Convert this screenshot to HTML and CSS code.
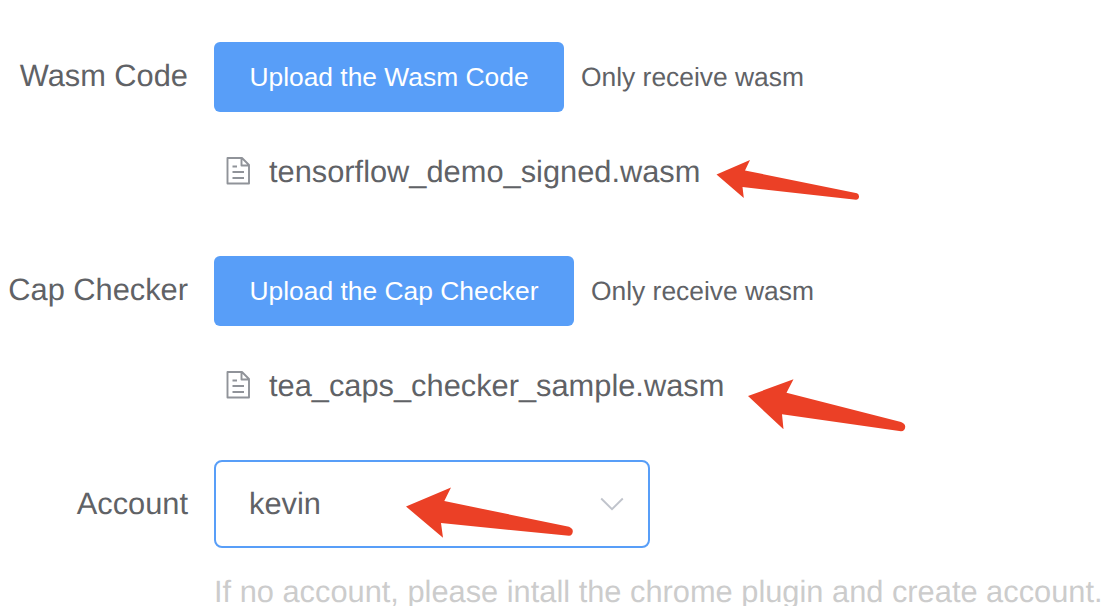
FILE: index.html
```html
<!DOCTYPE html>
<html lang="en">
<head>
<meta charset="utf-8">
<title>Upload</title>
<link rel="stylesheet" href="styles.css">
</head>
<body>
<form class="form">
  <div class="row">
    <label class="label">Wasm Code</label>
    <div class="content">
      <div class="upload">
        <button type="button" class="button button-code">Upload the Wasm Code</button>
        <span class="tip">Only receive wasm</span>
      </div>
      <div class="file">
        <svg class="doc" viewBox="0 0 24 28"><path d="M1.5 1H16L23 8V26.5H1.5Z M15.5 1V8.5H23 M6.5 9.5H11 M6.5 15H18 M6.5 21H18"/></svg>
        <span>tensorflow_demo_signed.wasm</span>
        <svg class="arrow arrow-code" viewBox="716 160 144 39"><path d="M716.5 174.5L750 160L745 170.5L857 193.3Q859.3 194.5 859 197Q858.5 199.8 856 199.8L742.5 187L743.8 198Z"/></svg>
      </div>
    </div>
  </div>
  <div class="row">
    <label class="label">Cap Checker</label>
    <div class="content">
      <div class="upload">
        <button type="button" class="button button-cap">Upload the Cap Checker</button>
        <span class="tip">Only receive wasm</span>
      </div>
      <div class="file">
        <svg class="doc" viewBox="0 0 24 28"><path d="M1.5 1H16L23 8V26.5H1.5Z M15.5 1V8.5H23 M6.5 9.5H11 M6.5 15H18 M6.5 21H18"/></svg>
        <span>tea_caps_checker_sample.wasm</span>
        <svg class="arrow arrow-cap" viewBox="748 379 158 54"><path d="M748 396L793.5 379.3L786.5 392.7L901 422Q905.5 423.8 905.2 427Q905 431 901 431.3L782 414.3L783.5 429.3Z"/></svg>
      </div>
    </div>
  </div>
  <div class="row">
    <label class="label label-account">Account</label>
    <div class="content">
      <div class="select">
        <span>kevin</span>
        <svg class="chevron" viewBox="0 0 24 14"><path d="M1.2 1.5L12 12.2L22.8 1.5"/></svg>
        <svg class="arrow arrow-account" viewBox="406 487 168 52"><path d="M406 506.5L451 487.5L444.3 501L569 526.8Q573 528.5 572.8 531.5Q572.5 535.5 569 535.8L441 523L443 537.8Z"/></svg>
      </div>
      <div class="help">If no account, please intall the chrome plugin and create account.</div>
    </div>
  </div>
</form>
</body>
</html>
```

FILE: styles.css
```css
body {
  margin: 0;
  background: #fff;
  color: #606266;
  font: 30.8px/40px "Liberation Sans", Arial, sans-serif;
  text-rendering: geometricPrecision;
  overflow: hidden;
}

.form {
  width: 1108px;
  height: 606px;
  padding-top: 42px;
  box-sizing: border-box;
  overflow: hidden;
}

.row {
  display: grid;
  grid-template-columns: 188px 894px;
  column-gap: 26px;
  height: 214px;
}

.row:last-child {
  height: 156px;
  margin-top: -10px;
}

.label {
  line-height: 68px;
  text-align: right;
  white-space: nowrap;
}

.label-account {
  line-height: 87px;
}

.upload {
  display: flex;
  align-items: center;
  gap: 17px;
  height: 70px;
}

.button {
  height: 70px;
  padding: 0;
  border: 0;
  border-radius: 6px;
  background: #589ef8;
  color: #fff;
  font: inherit;
  font-size: 26.4px;
}

.button-code {
  width: 350px;
}

.button-cap {
  width: 360px;
}

.tip {
  font-size: 26.4px;
}

.file {
  position: relative;
  display: flex;
  align-items: center;
  height: 40px;
  margin-top: 40px;
  padding-left: 12px;
}

.doc {
  width: 24px;
  height: 28px;
  margin: -3px 19px 0 0;
  fill: none;
  stroke: #909399;
  stroke-width: 1.9;
  stroke-linejoin: round;
}

.select {
  position: relative;
  display: flex;
  align-items: center;
  justify-content: space-between;
  width: 436px;
  height: 88px;
  padding: 0 24.5px 0 33px;
  box-sizing: border-box;
  border: 2px solid #589ef8;
  border-radius: 8px;
}

.chevron {
  width: 24px;
  height: 14px;
  fill: none;
  stroke: #c0c4cc;
  stroke-width: 1.9;
}

.arrow {
  position: absolute;
  overflow: visible;
  fill: #eb4026;
}

.arrow-code {
  left: 502px;
  top: 8px;
  width: 144px;
  height: 39px;
}

.arrow-cap {
  left: 534px;
  top: 13px;
  width: 158px;
  height: 54px;
}

.arrow-account {
  left: 190px;
  top: 25px;
  width: 168px;
  height: 52px;
}

.help {
  margin-top: 24px;
  color: #ccc;
  white-space: nowrap;
}
```
